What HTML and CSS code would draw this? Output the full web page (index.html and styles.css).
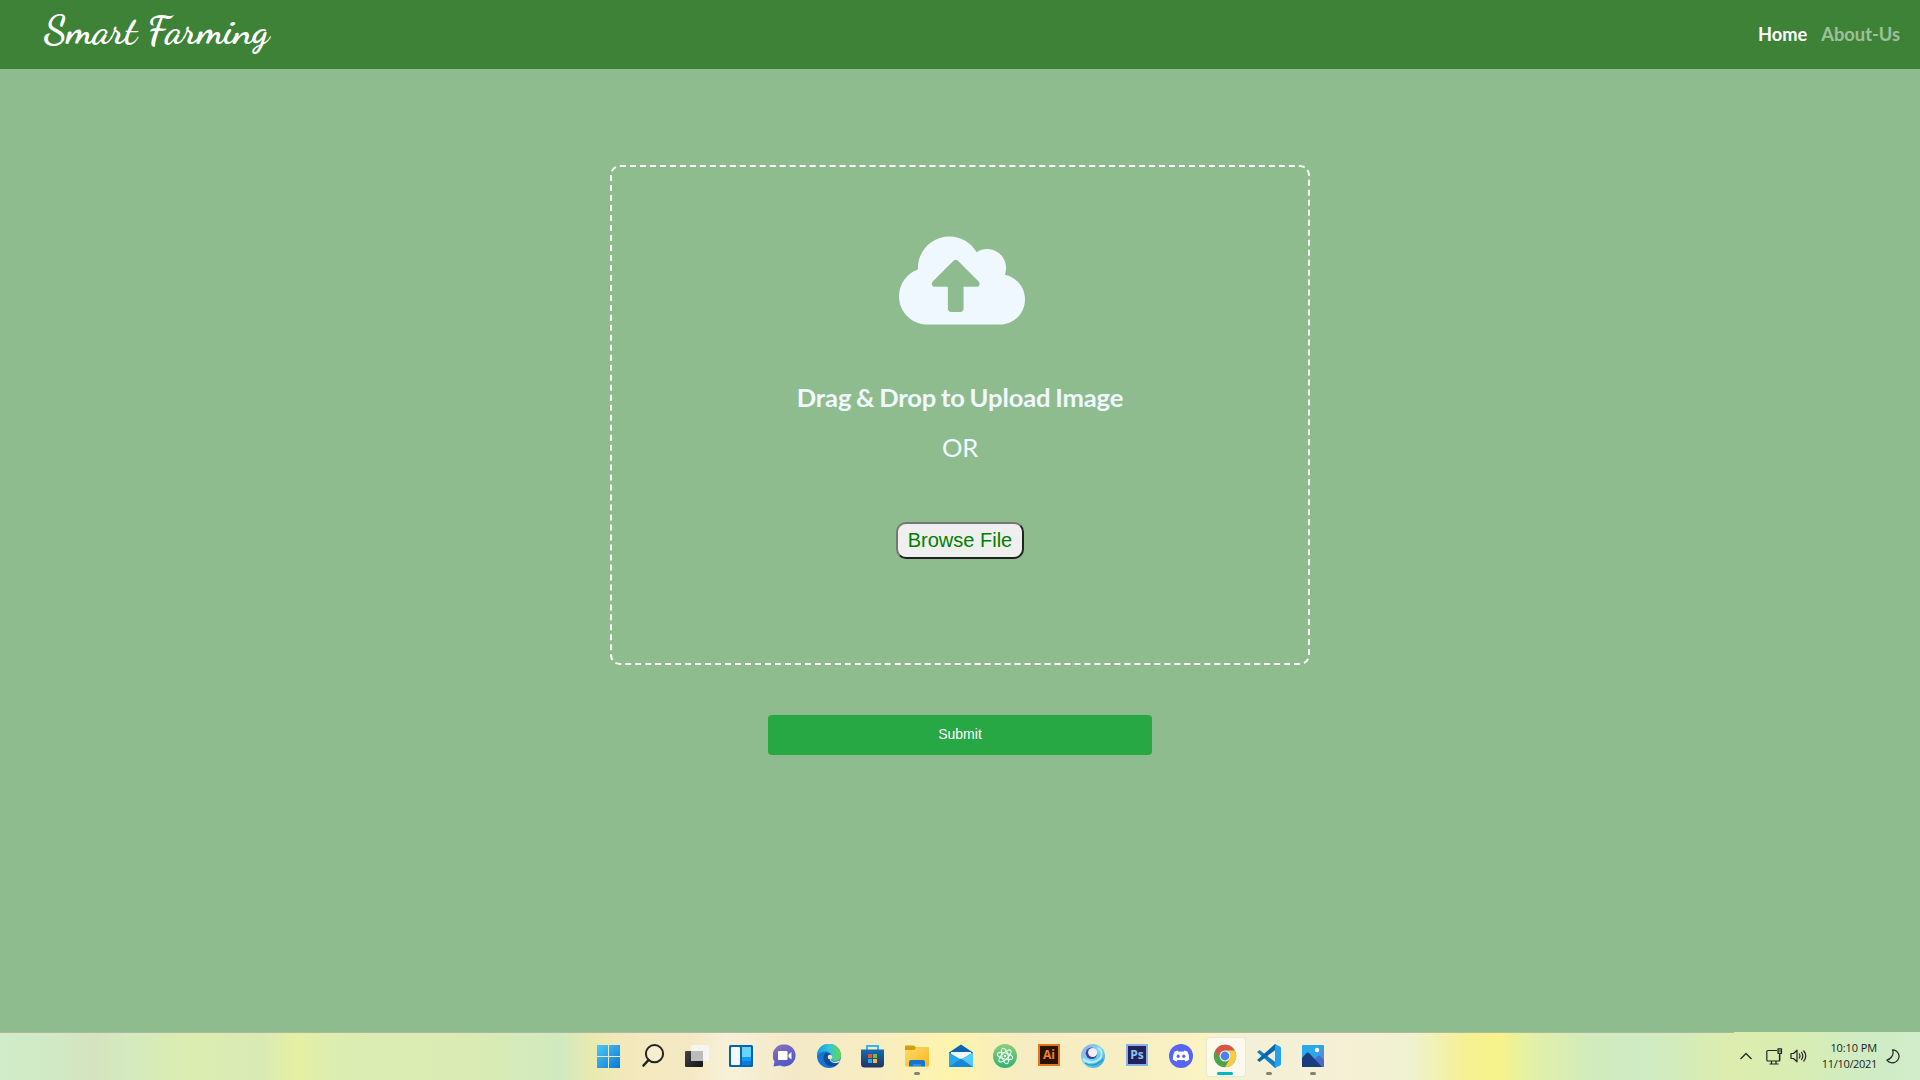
FILE: index.html
```html
<!DOCTYPE html>
<html lang="en">
<head>
<meta charset="utf-8">
<title>Smart Farming</title>
<link rel="stylesheet" href="styles.css">
</head>
<body>
<header class="navbar">
  <a class="brand">Smart Farming</a>
  <nav class="links"><a class="link active">Home</a><a class="link">About-Us</a></nav>
</header>
<main class="content">
  <section class="drop-area">
    <svg class="cloud" viewBox="0 0 640 512"><path d="M537.6 226.6c4.1-10.7 6.4-22.4 6.4-34.6 0-53-43-96-96-96-19.7 0-38.1 6-53.3 16.2C367 64.2 315.3 32 256 32c-88.4 0-160 71.6-160 160 0 2.7.1 5.4.2 8.1C40.2 219.8 0 273.2 0 336c0 79.5 64.5 144 144 144h368c70.7 0 128-57.3 128-128 0-61.9-44-113.6-102.4-125.4zM393.4 288H328v112c0 8.8-7.2 16-16 16h-48c-8.8 0-16-7.2-16-16V288h-65.4c-14.3 0-21.4-17.2-11.3-27.3l105.4-105.4c6.2-6.2 16.4-6.2 22.6 0l105.4 105.4c10.1 10.1 2.9 27.3-11.3 27.3z"/></svg>
    <h1 class="drop-title">Drag &amp; Drop to Upload Image</h1>
    <span class="or">OR</span>
    <button class="browse">Browse File</button>
  </section>
  <button class="submit">Submit</button>
</main>
<footer class="taskbar">
  <div class="apps">
    <span class="app"><svg viewBox="0 0 24 24"><defs><linearGradient id="win" x1="0" y1="0" x2="1" y2="1" gradientUnits="objectBoundingBox"><stop offset="0" stop-color="#4cc8f8"/><stop offset="1" stop-color="#0a78d2"/></linearGradient></defs><path fill="url(#win)" d="M0 1H11V12H0zM12 1H23V12H12zM0 13H11V24H0zM12 13H23V24H12z"/></svg></span>
    <span class="app"><svg viewBox="0 0 24 24"><circle cx="13.500" cy="9.700" r="8.600" fill="#fff" fill-opacity=".25" stroke="#222" stroke-width="2"/><path d="M7.500 16L2.500 21.500" stroke="#222" stroke-width="2.600" stroke-linecap="round"/></svg></span>
    <span class="app"><svg viewBox="0 0 24 24"><defs><linearGradient id="dark" x2="1" y2="1"><stop stop-color="#444"/><stop offset="1" stop-color="#141414"/></linearGradient></defs><rect y="7" width="18" height="16" rx="1" fill="url(#dark)"/><rect x="6" y="1" width="18" height="16" rx="1" fill="#f5f5f5" fill-opacity=".92"/><path d="M6 7h12v10H6z" fill="#bcbcbc"/></svg></span>
    <span class="app"><svg viewBox="0 0 24 24"><rect y="1" width="24" height="22" rx="1.500" fill="#0764b2"/><rect x="2" y="3" width="9" height="18" rx="1" fill="#f4f6f8"/><path d="M13 3h9v10h-9z" fill="#66d5fb"/><path d="M13 13h9v4h-9z" fill="#1997ed"/><path d="M13 17h9v4h-9z" fill="#087bdd"/></svg></span>
    <span class="app"><svg viewBox="0 0 24 24"><defs><linearGradient id="chat" x2=".5" y2="1"><stop stop-color="#8c72ba"/><stop offset="1" stop-color="#5158c9"/></linearGradient></defs><path fill="url(#chat)" d="M12 .5a11 11 0 1 1-5 21L.5 22.500l1-5A11 11 0 0 1 12 .5z"/><rect x="5" y="7" width="9.500" height="9" rx="1" fill="#fff"/><path d="M15.500 10.500l3-2.500v7.500l-3-2.500z" fill="#fff"/></svg></span>
    <span class="app"><svg viewBox="0 0 24 24"><defs><linearGradient id="edge" x2="1"><stop stop-color="#159ae2"/><stop offset=".5" stop-color="#35c5dc"/><stop offset="1" stop-color="#67d64d"/></linearGradient></defs><circle cx="12" cy="12" r="12" fill="#1676ce"/><path d="M0 12A12 12 0 0 1 24 11c0 4.500-3 6-6 6-3.500 0-4.500-1.500-3.500-3C16 11 13 7.500 8.500 7.500 4 7.500 1 10 0 12z" fill="url(#edge)"/><path d="M9 8.500c-5 4-2 13 5 14 4 .2 7-2 8.500-4.500-3 2-6.500 1.500-8.500 0-3-2-4-6-1-8z" fill="#114b9b"/><path d="M14.500 13.500c-1.700 2.500.5 4.300 3.200 4.300 2 0 4-.7 5.200-1.500L22.300 18.300c-4 1.500-8 .5-9.300-2.300z" fill="#fae9b8"/><circle cx="13" cy="13" r="2.300" fill="#fae9b8"/></svg></span>
    <span class="app"><svg viewBox="0 0 24 24"><defs><linearGradient id="store" y2="1" x2="0"><stop stop-color="#146bb5"/><stop offset="1" stop-color="#20335f"/></linearGradient></defs><path d="M6 6V2h11v4" fill="none" stroke="#35b7ed" stroke-width="2"/><path d="M0 5.500h23V20a3.500 3.500 0 0 1-3.500 3.500h-16A3.500 3.500 0 0 1 0 20z" fill="url(#store)"/><path d="M7 10h4v4H7z" fill="#ef5129"/><path d="M12 10h4v4h-4z" fill="#81ba32"/><path d="M7 15h4v4H7z" fill="#2ba7ec"/><path d="M12 15h4v4h-4z" fill="#fdb927"/></svg></span>
    <span class="app"><svg viewBox="0 0 24 24"><defs><linearGradient id="folder" x2="1" y2="1"><stop stop-color="#ffdc69"/><stop offset="1" stop-color="#f5b51e"/></linearGradient></defs><path d="M0 2.500q0-1 1-1h8l2 2h12q1 0 1 1V10H0z" fill="#d79c0b"/><path d="M0 6h9l2.500-2.500H24v18a1 1 0 0 1-1 1H1a1 1 0 0 1-1-1z" fill="url(#folder)"/><path d="M4 22.500V18q0-2 2-2h12q2 0 2 2v4.500h-4V20H8v2.500z" fill="#1674c9"/><path d="M8 20h8v2.500H8z" fill="#2d91df"/></svg><i class="dot"></i></span>
    <span class="app"><svg viewBox="0 0 24 24"><path d="M0 8.500L12 .5l12 8v3H0z" fill="#0964b4"/><path d="M2 8h20v8H2z" fill="#f4f7fc"/><path d="M0 8.500l12 7L24 8.500V23H0z" fill="#29a7ed"/><path d="M24 8.500V23L12 15.500z" fill="#55c9f8"/><path d="M0 23l12-8.500L24 23z" fill="#1687d8"/></svg></span>
    <span class="app"><svg viewBox="0 0 24 24"><defs><linearGradient id="atom" x2="0" y2="1"><stop stop-color="#8fcc79"/><stop offset="1" stop-color="#2fb276"/></linearGradient></defs><circle cx="12" cy="12" r="12" fill="url(#atom)"/><g fill="none" stroke="#e8fff1" stroke-width="1.100"><ellipse cx="12" cy="12" rx="8" ry="3.200" transform="rotate(15 12 12)"/><ellipse cx="12" cy="12" rx="8" ry="3.200" transform="rotate(75 12 12)"/><ellipse cx="12" cy="12" rx="8" ry="3.200" transform="rotate(135 12 12)"/></g><circle cx="12" cy="12" r="1.200" fill="#fff"/></svg></span>
    <span class="app"><b class="adobe ai">Ai</b></span>
    <span class="app"><svg viewBox="0 0 24 24"><defs><linearGradient id="swirl" x2="1" y2="1"><stop stop-color="#8ca6f1"/><stop offset=".5" stop-color="#7fdcf1"/><stop offset="1" stop-color="#289bdb"/></linearGradient></defs><circle cx="12" cy="12" r="12" fill="url(#swirl)"/><circle cx="10.500" cy="9.300" r="5.800" fill="#4a3c99"/><circle cx="11.700" cy="8.500" r="4.600" fill="#f0f0fa"/><path d="M2 15c5 5 14 4 18-2M17 4c5 3 4 8 2 11" fill="none" stroke="#b4effb" stroke-width="1.800"/><path d="M4 19c6 4 13 2 18-4" fill="none" stroke="#2797d2" stroke-width="1.300"/></svg></span>
    <span class="app"><b class="adobe ps">Ps</b></span>
    <span class="app"><svg viewBox="0 0 24 24"><circle cx="12" cy="12" r="12" fill="#5865f2"/><path d="M8.800 6.500l.7 1.200q2.500-.5 5 0l.7-1.200q1.700.3 3.200 1 2 3.500 1.800 8-1.700 1.400-3.900 1.900l-.9-1.600q-3.400.9-6.800 0l-.9 1.600q-2.200-.5-3.900-1.900-.2-4.500 1.800-8 1.500-.7 3.200-1z" fill="#fff"/><ellipse cx="9.200" cy="12.300" rx="1.600" ry="1.800" fill="#5865f2"/><ellipse cx="14.800" cy="12.300" rx="1.600" ry="1.800" fill="#5865f2"/></svg></span>
    <span class="app current"><svg viewBox="0 0 24 24"><circle cx="12" cy="12" r="11.200" fill="#4ba44c"/><path d="M2.300 6.400A11.200 11.200 0 0 1 21.700 6.400H12L7.200 14.800z" fill="#de5144"/><path d="M21.700 6.400A11.200 11.200 0 0 1 12 23.200L16.900 14.800 12 6.400z" fill="#fccb42"/><circle cx="12" cy="12" r="5.500" fill="#f6f6f0"/><circle cx="12" cy="12" r="4.400" fill="#4584ef"/></svg><i class="dot"></i></span>
    <span class="app"><svg viewBox="0 0 24 24"><path d="M0 8l2.500-2L19 18.500V24h-1z" fill="#127fc4"/><path d="M0 16l2.500 2L19 5.500V0h-1z" fill="#0869aa"/><path d="M18 0l5 2.500q1 .5 1 1.500v16q0 1-1 1.500L18 24z" fill="#27a2ea"/></svg><i class="dot"></i></span>
    <span class="app"><svg viewBox="0 0 24 24"><defs><linearGradient id="photo" x2="1" y2="1"><stop offset=".4" stop-color="#29a9e8"/><stop offset="1" stop-color="#6e79dc"/></linearGradient></defs><rect x="1" y="1" width="22" height="22" rx="1" fill="url(#photo)"/><path d="M13 16l4-4q1-1 2 0l4 4v7h-7z" fill="#466ccb"/><path d="M1 14l4.500-5q1.200-1 2.500 0L21 23H1z" fill="#173d7c"/><circle cx="16" cy="6" r="2.200" fill="#fff"/></svg><i class="dot"></i></span>
  </div>
  <div class="tray">
    <svg class="chevron" viewBox="0 0 12 8"><path d="M.5 7L6 1.500 11.500 7"/></svg>
    <svg class="network" viewBox="0 0 17 17"><path d="M11 2.500H2Q.8 2.500.8 3.700v8Q.8 13 2 13h11.500V7M5.500 13v3M10 13v3M3.500 16h9M12 .8h3.500v4.500H12zM12 3h3.500M13.800 5.500v7"/></svg>
    <svg class="sound" viewBox="0 0 17 14"><path d="M1 4.500h2.500L7 1.200v11.600L3.500 9.500H1zM9 4.500q2 2.500 0 5M11.300 3q3 4 0 8M13.500 1.500q4.500 5.500 0 11"/></svg>
    <div class="clock"><span class="time">10:10 PM</span><span class="date">11/10/2021</span></div>
    <svg class="moon" viewBox="0 0 14 15"><path d="M6.500 .8Q8 5 5.500 8 3.500 10.500 .8 11C3 14.500 9 15 11.800 11 15 6.500 11.500 1 6.500 .8z"/></svg>
  </div>
</footer>
</body>
</html>
```
FILE: styles.css
```css
* { box-sizing: border-box; }
body {
  margin: 0;
  height: 1080px;
  display: flex;
  flex-direction: column;
  overflow: hidden;
  background: #8fbc8f;
  font-family: Lato, sans-serif;
}
.navbar {
  height: 69px;
  padding: 0 20px 0 44px;
  display: flex;
  justify-content: space-between;
  background: #3d8237;
  color: #fff;
}
.brand {
  font: 700 40px/61px "Dancing Script", "Liberation Serif", cursive;
  white-space: nowrap;
}
.links { display: flex; gap: 14px; }
.link { font-size: 18.300px; font-weight: 700; line-height: 69px; color: rgba(255, 255, 255, .5); }
.link.active { color: #fff; }
.content {
  flex: 1;
  display: flex;
  flex-direction: column;
  align-items: center;
  padding-top: 96px;
}
.drop-area {
  width: 700px;
  height: 500px;
  border: 2px dashed #fff;
  border-radius: 10px;
  display: flex;
  flex-direction: column;
  align-items: center;
  color: aliceblue;
}
.cloud { width: 126px; height: 101px; margin: 63px 0 0 4px; fill: aliceblue; }
.drop-title { margin: 46px 0 0; font-size: 25.600px; line-height: 40px; font-weight: 700; letter-spacing: -.15px; word-spacing: -1.300px; }
.or { margin-top: 10px; font-size: 25.600px; line-height: 40px; letter-spacing: -.3px; }
.browse {
  width: 128px;
  height: 37px;
  margin-top: 55px;
  padding: 0;
  border: 2px solid;
  border-color: #767676 #212121 #212121 #767676;
  border-radius: 10px;
  background: #efefef;
  color: green;
  font: 20px "Liberation Sans", Arial, sans-serif;
}
.submit {
  width: 384px;
  height: 40px;
  margin-top: 50px;
  padding: 0 0 2px;
  border: 0;
  border-radius: 4px;
  background: #28a745;
  color: #fff;
  font: 14px "Liberation Sans", Arial, sans-serif;
}
.taskbar {
  height: 48px;
  display: grid;
  grid-template-columns: 587px 748px 1fr;
  background:
    linear-gradient(90deg, #b0b7a0 1734px, transparent 1734px) 0 0 / 100% 1px no-repeat,
    linear-gradient(90deg, #d0ecc8 0, #d1e9c4 60px, #d5e3c0 90px, #d4eabd 130px, #dcedb0 190px, #d9ebb4 260px, #e6f0a3 298px, #dbedb1 335px, #daecb3 470px, #d1e9bf 560px, #e8eab0 592px, #f3e8bd 630px, #f5e9c4 690px, #f7f1d9 730px, #f4e9c8 790px, #f8edc0 880px, #fdf4ad 950px, #f6ecc1 1020px, #f7efc4 1130px, #faf3c2 1200px, #f3f0d7 1250px, #f6f0d5 1350px, #eff2d1 1410px, #f5f094 1465px, #f6f389 1500px, #e3f1a7 1530px, #d2ebbd 1590px, #ceebc4 1640px, #dcedae 1730px, #d9edb2 1790px, #cfecc5 1870px, #d1edca 1920px);
}
.apps { grid-column: 2; display: flex; }
.app { width: 44px; height: 48px; display: grid; place-items: center; position: relative; }
.app > svg { width: 24px; height: 24px; }
.current::before {
  content: "";
  position: absolute;
  left: 3px;
  top: 5px;
  width: 38px;
  height: 38px;
  border: 1px solid rgba(190, 190, 165, .3);
  border-radius: 4px;
  background: rgba(255, 255, 255, .6);
}
.current > svg { position: relative; }
.dot { position: absolute; left: 19px; top: 40px; width: 6px; height: 3px; border-radius: 2px; background: #85836f; }
.current .dot { left: 14px; width: 16px; background: #00b7c3; }
.adobe { width: 22px; height: 22px; margin-bottom: 2px; font: 700 12px/17px "Open Sans", sans-serif; text-align: center; }
.ai { border: 2px solid #e27619; background: #281303; color: #f58220; }
.ps { border: 2px solid #82b4e8; background: #26215b; color: #86c5f3; }
.tray { display: flex; align-items: center; padding-left: 405px; }
.tray svg { fill: none; stroke: #222; stroke-width: 1.200; stroke-linejoin: round; flex: none; }
.chevron { width: 12px; height: 8px; }
.network { width: 17px; height: 17px; margin-left: 14px; }
.sound { width: 17px; height: 14px; margin-left: 7px; }
.clock { width: 70px; display: flex; flex-direction: column; align-items: flex-end; font: 11px/16px "Open Sans", "Noto Sans", sans-serif; color: #1c1c1c; white-space: nowrap; }
.time { letter-spacing: -.1px; }
.date { letter-spacing: -.32px; }
.moon { width: 14px; height: 15px; margin-left: 9px; }
```
